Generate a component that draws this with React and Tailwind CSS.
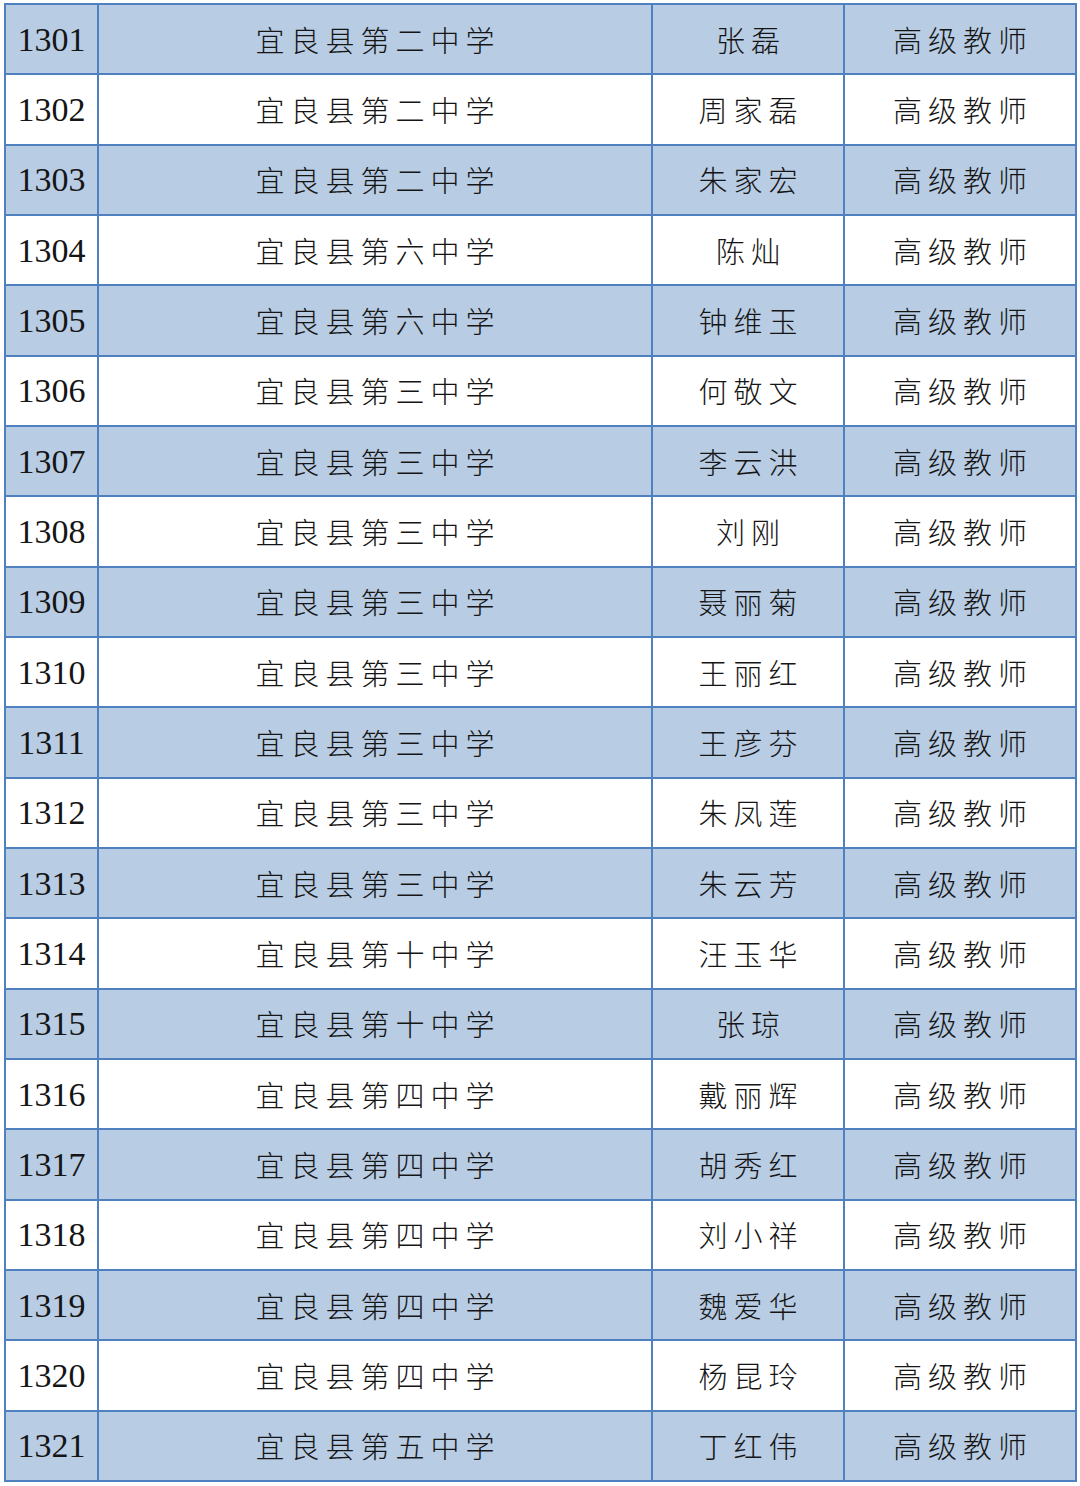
import React from 'react';

const rows = [
    ['1301', '宜良县第二中学', '张磊'],
    ['1302', '宜良县第二中学', '周家磊'],
    ['1303', '宜良县第二中学', '朱家宏'],
    ['1304', '宜良县第六中学', '陈灿'],
    ['1305', '宜良县第六中学', '钟维玉'],
    ['1306', '宜良县第三中学', '何敬文'],
    ['1307', '宜良县第三中学', '李云洪'],
    ['1308', '宜良县第三中学', '刘刚'],
    ['1309', '宜良县第三中学', '聂丽菊'],
    ['1310', '宜良县第三中学', '王丽红'],
    ['1311', '宜良县第三中学', '王彦芬'],
    ['1312', '宜良县第三中学', '朱凤莲'],
    ['1313', '宜良县第三中学', '朱云芳'],
    ['1314', '宜良县第十中学', '汪玉华'],
    ['1315', '宜良县第十中学', '张琼'],
    ['1316', '宜良县第四中学', '戴丽辉'],
    ['1317', '宜良县第四中学', '胡秀红'],
    ['1318', '宜良县第四中学', '刘小祥'],
    ['1319', '宜良县第四中学', '魏爱华'],
    ['1320', '宜良县第四中学', '杨昆玲'],
    ['1321', '宜良县第五中学', '丁红伟'],
];

// 中文单元格通用样式
const cjkCell = "flex items-center justify-center text-[29px] font-light tracking-[6px] pl-[6px] leading-none font-['Noto_Sans_CJK_SC',sans-serif]";

const App = () => {
    return (
        <div className="w-[1080px] h-[1486px] bg-white pt-[3px] pl-[4px]">
            <div className="w-[1073px] h-[1479px] border-2 border-[#4f80bf] flex flex-col text-[#151515]">
                {rows.map(([id, school, name], i) => (
                    <div
                        key={id}
                        className={`flex flex-1 ${i < rows.length - 1 ? 'border-b-2 border-[#4f80bf]' : ''} ${i % 2 === 0 ? 'bg-[#b8cce4]' : 'bg-white'}`}
                    >
                        <div className="w-[93px] shrink-0 border-r-2 border-[#4f80bf] flex items-center justify-center text-[34px] leading-none pt-[1px] font-['Liberation_Serif',serif]">
                            {id}
                        </div>
                        <div className={`w-[554px] shrink-0 border-r-2 border-[#4f80bf] ${cjkCell}`}>
                            {school}
                        </div>
                        <div className={`w-[192px] shrink-0 border-r-2 border-[#4f80bf] ${cjkCell}`}>
                            {name}
                        </div>
                        <div className={`flex-1 ${cjkCell}`}>
                            高级教师
                        </div>
                    </div>
                ))}
            </div>
        </div>
    );
};

export default App;
